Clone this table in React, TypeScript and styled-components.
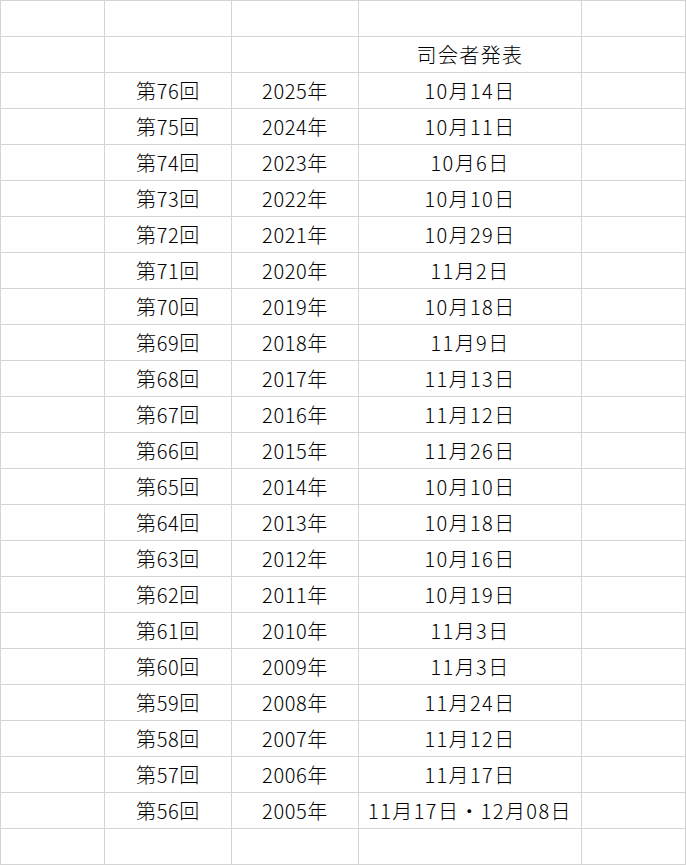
import React from "react";
import styled, { createGlobalStyle } from "styled-components";

const rows: [string, string, string][] = [
  ["第76回", "2025年", "10月14日"],
  ["第75回", "2024年", "10月11日"],
  ["第74回", "2023年", "10月6日"],
  ["第73回", "2022年", "10月10日"],
  ["第72回", "2021年", "10月29日"],
  ["第71回", "2020年", "11月2日"],
  ["第70回", "2019年", "10月18日"],
  ["第69回", "2018年", "11月9日"],
  ["第68回", "2017年", "11月13日"],
  ["第67回", "2016年", "11月12日"],
  ["第66回", "2015年", "11月26日"],
  ["第65回", "2014年", "10月10日"],
  ["第64回", "2013年", "10月18日"],
  ["第63回", "2012年", "10月16日"],
  ["第62回", "2011年", "10月19日"],
  ["第61回", "2010年", "11月3日"],
  ["第60回", "2009年", "11月3日"],
  ["第59回", "2008年", "11月24日"],
  ["第58回", "2007年", "11月12日"],
  ["第57回", "2006年", "11月17日"],
  ["第56回", "2005年", "11月17日・12月08日"],
];

const App = () => {
  const all: string[][] = [
    ["", "", "", "", ""],
    ["", "", "", "司会者発表", ""],
    ...rows.map((r) => ["", r[0], r[1], r[2], ""]),
    ["", "", "", "", ""],
  ];

  return (
    <>
      <GlobalStyle />
      <Sheet>
        {all.map((row, i) =>
          row.map((text, j) => (
            <Cell key={`${i}-${j}`} $wide={j === 3}>
              {text}
            </Cell>
          ))
        )}
      </Sheet>
    </>
  );
};

const GlobalStyle = createGlobalStyle`
  html, body {
    margin: 0;
    padding: 0;
    background: #ffffff;
  }
`;

const Sheet = styled.div`
  display: grid;
  grid-template-columns: 104px 127px 127px 223px 104px;
  grid-auto-rows: 36px;
  width: 686px;
  box-sizing: border-box;
  border-top: 1px solid #d4d4d4;
  border-left: 1px solid #d4d4d4;
  font-family: "Noto Sans CJK JP", sans-serif;
  font-size: 20px;
  font-weight: 300;
  color: #000000;
`;

const Cell = styled.div<{ $wide?: boolean }>`
  box-sizing: border-box;
  border-right: 1px solid #d4d4d4;
  border-bottom: 1px solid #d4d4d4;
  display: flex;
  align-items: center;
  justify-content: center;
  white-space: nowrap;
  line-height: 1;
  letter-spacing: ${(p) => (p.$wide ? "1.4px" : "0.6px")};
`;

export default App;
